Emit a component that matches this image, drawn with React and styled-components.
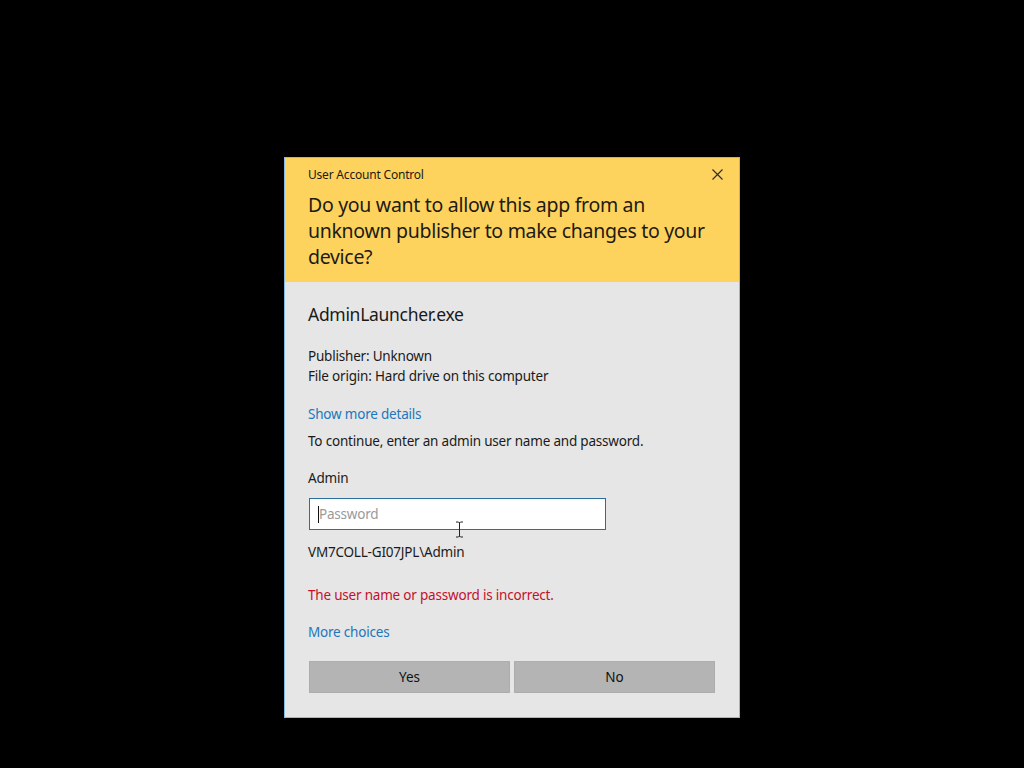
import styled, { createGlobalStyle } from 'styled-components';

const GlobalStyle = createGlobalStyle`
  html, body {
    margin: 0;
    padding: 0;
    background: #000;
  }
  #root {
    height: 768px;
  }
`;

const App = () => {
  return (
    <>
      <GlobalStyle />
      <Screen>
        <Dialog>
          <Header>
            <TitleRow>
              <SmallTitle>User Account Control</SmallTitle>
              <CloseButton aria-label="Close">
                <svg width="11" height="11" viewBox="0 0 11 11">
                  <path d="M0.5 0.5 L10.5 10.5 M10.5 0.5 L0.5 10.5" stroke="#2b2b2b" strokeWidth="1.1" fill="none" />
                </svg>
              </CloseButton>
            </TitleRow>
            <Question>
              Do you want to allow this app from an unknown publisher to make changes to your device?
            </Question>
          </Header>
          <Body>
            <AppName>AdminLauncher.exe</AppName>
            <Info>
              <Line>Publisher: Unknown</Line>
              <Line>File origin: Hard drive on this computer</Line>
            </Info>
            <Link>Show more details</Link>
            <Line>To continue, enter an admin user name and password.</Line>
            <UserName>Admin</UserName>
            <InputWrap>
              <Caret />
              <Input placeholder="Password" />
              <Cursor>
                <svg width="9" height="17" viewBox="0 0 9 17">
                  <path d="M1 1 H3.5 M5.5 1 H8 M4.5 1.5 V15.5 M1 16 H3.5 M5.5 16 H8 M3.5 1 L4.5 2 L5.5 1 M3.5 16 L4.5 15 L5.5 16" stroke="#222" strokeWidth="1" fill="none" />
                </svg>
              </Cursor>
            </InputWrap>
            <Line>VM7COLL-GI07JPL\Admin</Line>
            <ErrorText>The user name or password is incorrect.</ErrorText>
            <Link $gap="17px">More choices</Link>
            <Buttons>
              <Button>Yes</Button>
              <Button>No</Button>
            </Buttons>
          </Body>
        </Dialog>
      </Screen>
    </>
  );
};

const Screen = styled.div`
  width: 1024px;
  height: 768px;
  background: #000;
  display: flex;
  justify-content: center;
  padding-top: 157px;
  box-sizing: border-box;
  font-family: "Segoe UI", "Noto Sans", "Open Sans", sans-serif;
`;

const Dialog = styled.div`
  width: 456px;
  height: 561px;
  box-sizing: border-box;
  border: 1px solid #84bde6;
  display: flex;
  flex-direction: column;
  background: #e6e6e6;
`;

const Header = styled.div`
  background: #fdd35e;
  height: 124px;
  box-sizing: border-box;
  padding: 7px 12px 0 23px;
`;

const TitleRow = styled.div`
  display: flex;
  justify-content: space-between;
  align-items: center;
  height: 18px;
`;

const SmallTitle = styled.div`
  font-size: 12px;
  color: #1d1a14;
  letter-spacing: -0.2px;
`;

const CloseButton = styled.div`
  width: 20px;
  height: 18px;
  display: flex;
  align-items: center;
  justify-content: center;
`;

const Question = styled.div`
  margin-top: 9px;
  font-size: 19.5px;
  line-height: 26px;
  color: #1d1a14;
  letter-spacing: -0.3px;
  padding-right: 14px;
`;

const Body = styled.div`
  flex: 1;
  padding: 20px 24px 0 23px;
  display: flex;
  flex-direction: column;
  color: #1a1a1a;
  font-size: 13.5px;
  letter-spacing: -0.2px;
`;

const AppName = styled.div`
  font-size: 17.5px;
  line-height: 24px;
  letter-spacing: -0.3px;
`;

const Info = styled.div`
  margin-top: 20px;
  margin-bottom: 18px;
`;

const Line = styled.div`
  line-height: 20px;
`;

const Link = styled.div`
  color: #2176bd;
  line-height: 20px;
  margin-top: ${(p) => p.$gap || '0'};
  margin-bottom: 7px;
`;

const UserName = styled.div`
  line-height: 20px;
  margin-top: 17px;
  margin-bottom: 10px;
`;

const InputWrap = styled.div`
  position: relative;
  width: 297px;
  height: 32px;
  margin-left: 1px;
  margin-bottom: 12px;
`;

const Input = styled.input`
  width: 100%;
  height: 100%;
  box-sizing: border-box;
  border: 1px solid #2a6f9c;
  background: #fff;
  outline: none;
  padding: 0 0 0 9px;
  font-family: inherit;
  font-size: 13.5px;
  letter-spacing: -0.2px;
  &::placeholder {
    color: #9a9a9a;
  }
`;

const Caret = styled.div`
  position: absolute;
  left: 9px;
  top: 8px;
  width: 1px;
  height: 17px;
  background: #111;
  z-index: 1;
`;

const Cursor = styled.div`
  position: absolute;
  left: 146px;
  top: 23px;
  line-height: 0;
`;

const ErrorText = styled.div`
  color: #c4102c;
  line-height: 20px;
  margin-top: 23px;
`;

const Buttons = styled.div`
  display: grid;
  grid-template-columns: 1fr 1fr;
  gap: 4px;
  margin-top: 12px;
  margin-left: 1px;
`;

const Button = styled.button`
  height: 32px;
  background: #b4b4b4;
  border: 1px solid #adadad;
  font-family: inherit;
  font-size: 13.5px;
  color: #111;
  padding: 0;
`;

export default App;
